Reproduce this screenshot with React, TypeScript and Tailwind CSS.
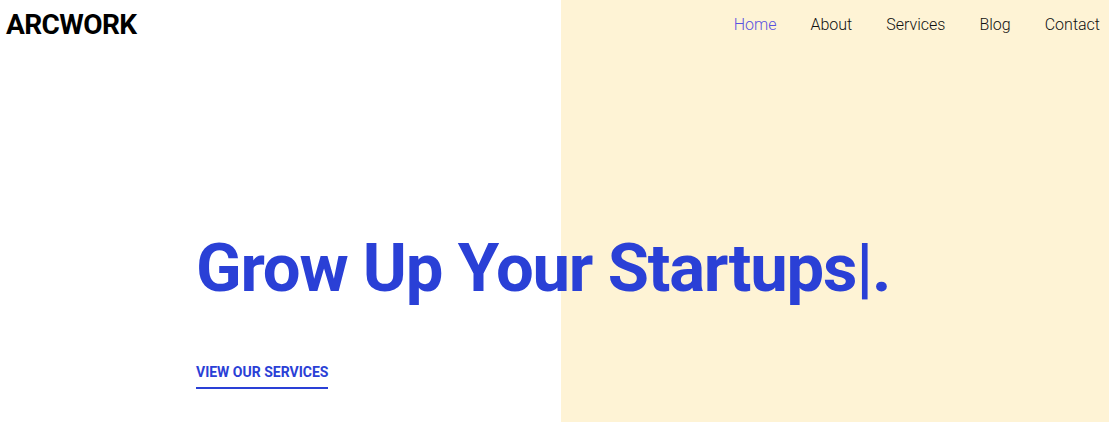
import React from 'react';

const links = ['Home', 'About', 'Services', 'Blog', 'Contact'];

const App: React.FC = () => {
    return (
        <div
            className="h-[422px] w-full overflow-hidden bg-[linear-gradient(to_right,#ffffff_561px,#fef3d5_561px)]"
            style={{ fontFamily: 'Roboto, "Liberation Sans", sans-serif' }}
        >
            {/* header */}
            <header className="flex items-center justify-between h-[50px] pl-[6px] pr-[9px]">
                <div className="text-[28px] font-bold text-black leading-none tracking-[-0.6px]">ARCWORK</div>
                <nav className="flex items-center gap-[34px] text-[16px] font-light">
                    {links.map((l, i) => (
                        <a key={l} href="#" className={i === 0 ? 'text-[#5a52e0]' : 'text-[#111111]'}>
                            {l}
                        </a>
                    ))}
                </nav>
            </header>

            {/* hero */}
            <section className="pl-[196px] pt-[185px]">
                <h1 className="text-[67px] font-bold leading-none text-[#2a40d6] tracking-[-1.2px]">
                    Grow Up Your Startups|.
                </h1>
                <a
                    href="#"
                    className="inline-block mt-[63px] text-[14px] font-bold text-[#2a40d6] border-b-[2px] border-[#2a40d6] pb-[8px] leading-none"
                >
                    VIEW OUR SERVICES
                </a>
            </section>
        </div>
    );
};

export default App;
